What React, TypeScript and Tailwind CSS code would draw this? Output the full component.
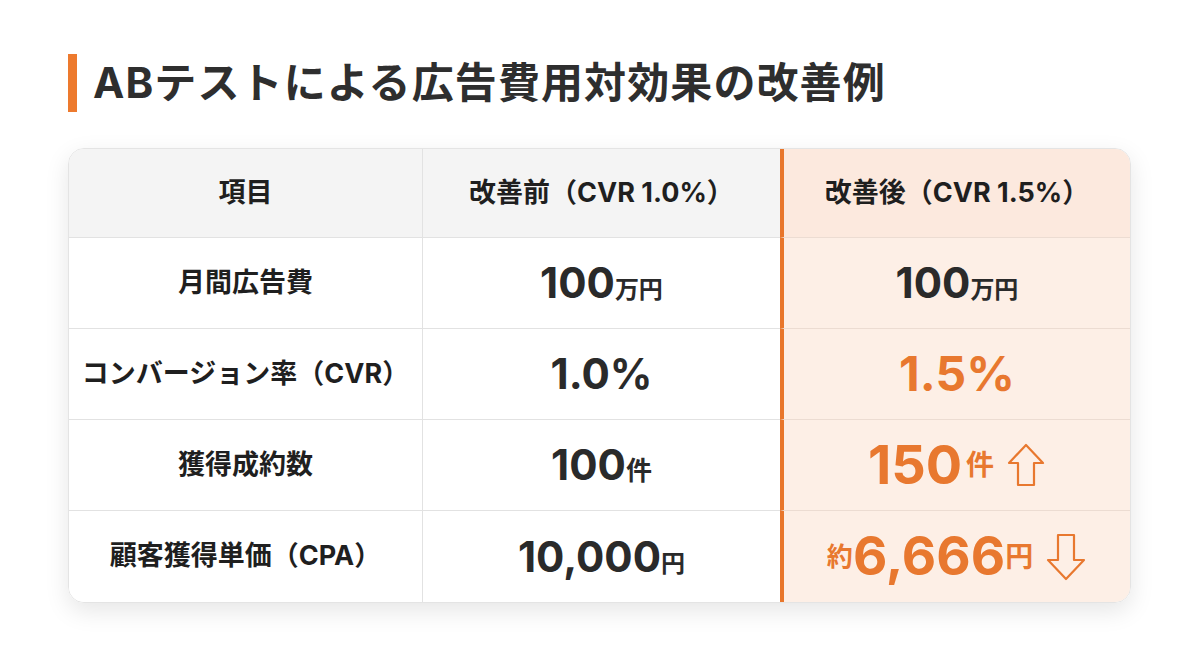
const jp = "font-['Inter','Noto_Sans_CJK_JP',sans-serif]";
const num = "font-['Inter','Noto_Sans_CJK_JP',sans-serif]";

function UpArrow() {
  return (
    <svg width="40" height="44" viewBox="0 0 40 44" fill="none" className="ml-3">
      <path
        d="M20 2 L37 20 L28 20 L28 42 L12 42 L12 20 L3 20 Z"
        stroke="#e8782f"
        strokeWidth="2.2"
        strokeLinejoin="round"
      />
    </svg>
  );
}

function DownArrow() {
  return (
    <svg width="42" height="48" viewBox="0 0 42 48" fill="none" className="ml-3">
      <path
        d="M21 46 L39 27 L29 27 L29 2 L13 2 L13 27 L3 27 Z"
        stroke="#e8782f"
        strokeWidth="2.2"
        strokeLinejoin="round"
      />
    </svg>
  );
}

const rows = [
  {
    label: '月間広告費',
    before: (
      <span className="text-[#2a2a2a]">
        <span className={`${num} text-[42px]`}>100</span>
        <span className={`${jp} text-[24px]`}>万円</span>
      </span>
    ),
    after: (
      <span className="text-[#2a2a2a]">
        <span className={`${num} text-[42px]`}>100</span>
        <span className={`${jp} text-[24px]`}>万円</span>
      </span>
    ),
  },
  {
    label: 'コンバージョン率（CVR）',
    before: <span className={`${num} text-[42px] text-[#2a2a2a]`}>1.0%</span>,
    after: <span className={`${num} text-[48px] text-[#e8782f]`}>1.5%</span>,
  },
  {
    label: '獲得成約数',
    before: (
      <span className="text-[#2a2a2a]">
        <span className={`${num} text-[42px]`}>100</span>
        <span className={`${jp} text-[26px]`}>件</span>
      </span>
    ),
    after: (
      <span className="flex items-center text-[#e8782f]">
        <span className={`${num} text-[54px]`}>150</span>
        <span className={`${jp} text-[28px] ml-1`}>件</span>
        <UpArrow />
      </span>
    ),
  },
  {
    label: '顧客獲得単価（CPA）',
    before: (
      <span className="text-[#2a2a2a]">
        <span className={`${num} text-[42px]`}>10,000</span>
        <span className={`${jp} text-[24px]`}>円</span>
      </span>
    ),
    after: (
      <span className="flex items-center text-[#e8782f]">
        <span className={`${jp} text-[26px]`}>約</span>
        <span className={`${num} text-[53px]`}>6,666</span>
        <span className={`${jp} text-[28px]`}>円</span>
        <DownArrow />
      </span>
    ),
  },
];

export default function App() {
  return (
    <div className={`w-[1200px] h-[670px] bg-white ${jp} font-bold`}>
      <div className="pl-[68px] pt-[54px] pr-[69px]">
        <div className="flex items-center h-[58px]">
          <div className="w-[9px] h-[58px] bg-[#ed7a2e]" />
          <h1 className="ml-[16px] text-[42px] leading-none text-[#2e2e2e] tracking-[1.1px]">
            ABテストによる広告費用対効果の改善例
          </h1>
        </div>

        <div className="mt-[36px] rounded-[16px] overflow-hidden border border-[#e4e4e4] shadow-[0_8px_24px_rgba(0,0,0,0.10)] grid grid-cols-[354px_357px_1fr]">
          <div className="h-[89px] bg-[#f4f4f4] border-r border-b border-[#e2e2e2] flex items-center justify-center text-[27px] text-[#1f1f1f]">
            項目
          </div>
          <div className="h-[89px] bg-[#f4f4f4] border-b border-[#e2e2e2] flex items-center justify-center text-[27px] text-[#1f1f1f]">
            改善前（CVR 1.0%）
          </div>
          <div className="h-[89px] bg-[#fce9de] border-l-[4px] border-l-[#e8762b] border-b border-b-[#ecdcd2] flex items-center justify-center text-[27px] text-[#1f1f1f]">
            改善後（CVR 1.5%）
          </div>

          {rows.map((r, i) => {
            const last = i === rows.length - 1;
            return (
              <div key={r.label} className="contents">
                <div
                  className={`h-[91px] bg-white border-r border-[#e2e2e2] flex items-center justify-center text-[27px] text-[#1f1f1f] ${last ? '' : 'border-b'}`}
                >
                  {r.label}
                </div>
                <div
                  className={`h-[91px] bg-white border-[#e2e2e2] flex items-center justify-center leading-none ${last ? '' : 'border-b'}`}
                >
                  {r.before}
                </div>
                <div
                  className={`h-[91px] bg-[#fdefe6] border-l-[4px] border-l-[#e8762b] border-b-[#ecdcd2] flex items-center justify-center leading-none ${last ? '' : 'border-b'}`}
                >
                  {r.after}
                </div>
              </div>
            );
          })}
        </div>
      </div>
    </div>
  );
}
